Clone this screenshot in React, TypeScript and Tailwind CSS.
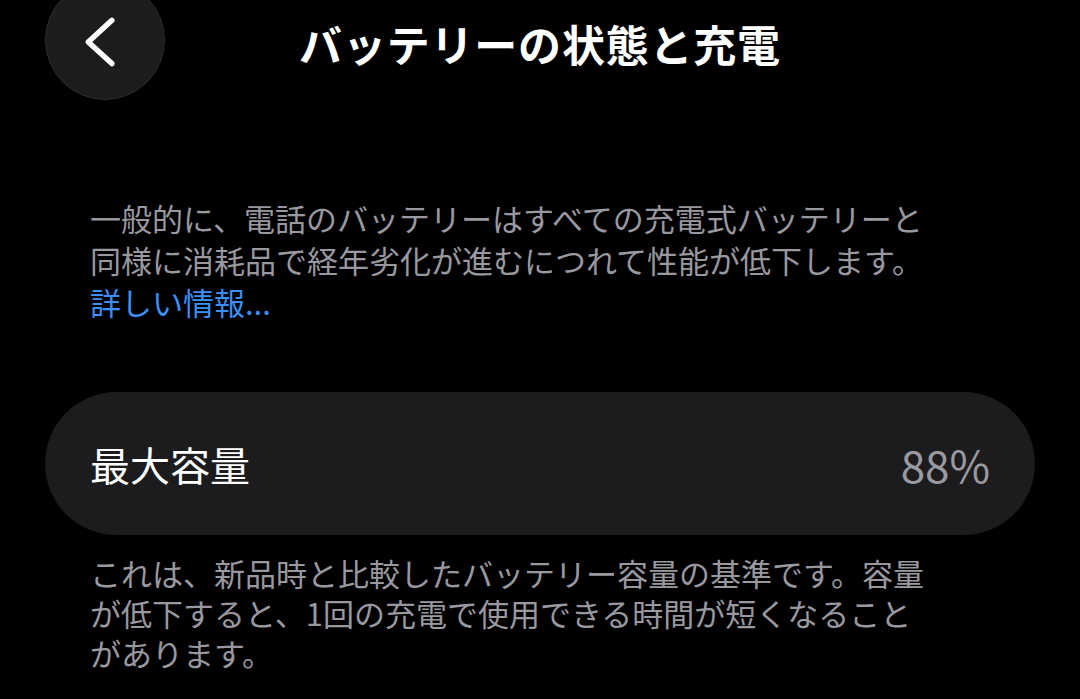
const font = { fontFamily: '"Noto Sans CJK JP", "Noto Sans", sans-serif' };

export default function App() {
  return (
    <div className="w-full h-[699px] bg-black overflow-hidden text-white" style={font}>
      {/* nav bar */}
      <div className="grid grid-cols-[1fr_auto_1fr] items-start h-[100px]">
        <div className="pl-[45px]">
          <button className="-mt-[20px] w-[120px] h-[120px] rounded-full bg-[#1c1c1e] border border-[#2c2c2e]">
            <svg viewBox="0 0 120 120" className="w-full h-full">
              <polyline
                points="67,40 43,62 67,84"
                fill="none"
                stroke="white"
                strokeWidth="5.5"
                strokeLinecap="round"
                strokeLinejoin="round"
              />
            </svg>
          </button>
        </div>
        <h1 className="mt-[18px] text-[43px] leading-[50px] font-bold tracking-[0.8px]">バッテリーの状態と充電</h1>
        <div />
      </div>

      <p className="mt-[97px] px-[90px] text-[31px] leading-[42px] text-[#98989e]">
        一般的に、電話のバッテリーはすべての充電式バッテリーと
        <br />
        同様に消耗品で経年劣化が進むにつれて性能が低下します。
        <br />
        <span className="text-[#3b8ff5]">詳しい情報...</span>
      </p>

      <div className="mt-[69px] mx-[45px] h-[143px] rounded-[72px] bg-[#1c1c1e] flex items-center justify-between px-[45px]">
        <span className="text-[40px] leading-none">最大容量</span>
        <span className="text-[44px] leading-none text-[#9a9aa0]">88%</span>
      </div>

      <p className="mt-[18px] px-[90px] text-[31px] leading-[40px] text-[#98989e]">
        これは、新品時と比較したバッテリー容量の基準です。容量
        <br />
        が低下すると、1回の充電で使用できる時間が短くなること
        <br />
        があります。
      </p>
    </div>
  );
}
